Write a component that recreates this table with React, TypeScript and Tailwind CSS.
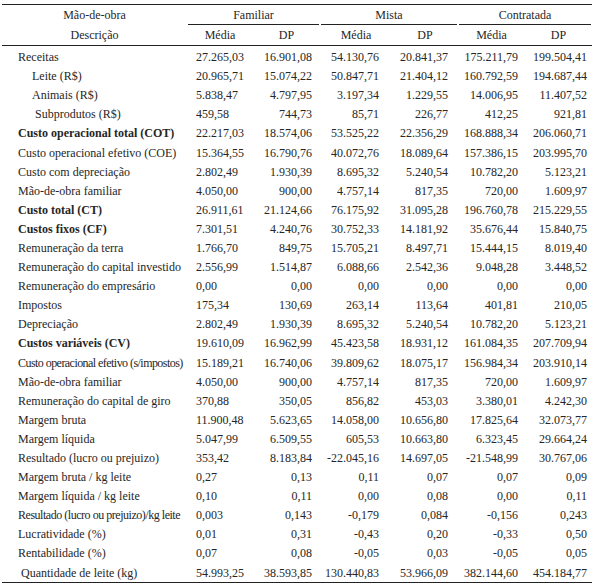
type Row = {
  label: string;
  values: string[];
  bold?: boolean;
  indent?: string;
  tight?: string;
};

const rows: Row[] = [
  { label: "Receitas", values: ["27.265,03", "16.901,08", "54.130,76", "20.841,37", "175.211,79", "199.504,41"] },
  { label: "Leite (R$)", indent: "pl-[30px]", values: ["20.965,71", "15.074,22", "50.847,71", "21.404,12", "160.792,59", "194.687,44"] },
  { label: "Animais (R$)", indent: "pl-[30px]", values: ["5.838,47", "4.797,95", "3.197,34", "1.229,55", "14.006,95", "11.407,52"] },
  { label: "Subprodutos (R$)", indent: "pl-[33px]", values: ["459,58", "744,73", "85,71", "226,77", "412,25", "921,81"] },
  { label: "Custo operacional total (COT)", bold: true, values: ["22.217,03", "18.574,06", "53.525,22", "22.356,29", "168.888,34", "206.060,71"] },
  { label: "Custo operacional efetivo (COE)", values: ["15.364,55", "16.790,76", "40.072,76", "18.089,64", "157.386,15", "203.995,70"] },
  { label: "Custo com depreciação", values: ["2.802,49", "1.930,39", "8.695,32", "5.240,54", "10.782,20", "5.123,21"] },
  { label: "Mão-de-obra familiar", values: ["4.050,00", "900,00", "4.757,14", "817,35", "720,00", "1.609,97"] },
  { label: "Custo total (CT)", bold: true, values: ["26.911,61", "21.124,66", "76.175,92", "31.095,28", "196.760,78", "215.229,55"] },
  { label: "Custos fixos (CF)", bold: true, values: ["7.301,51", "4.240,76", "30.752,33", "14.181,92", "35.676,44", "15.840,75"] },
  { label: "Remuneração da terra", values: ["1.766,70", "849,75", "15.705,21", "8.497,71", "15.444,15", "8.019,40"] },
  { label: "Remuneração do capital investido", values: ["2.556,99", "1.514,87", "6.088,66", "2.542,36", "9.048,28", "3.448,52"] },
  { label: "Remuneração do empresário", values: ["0,00", "0,00", "0,00", "0,00", "0,00", "0,00"] },
  { label: "Impostos", values: ["175,34", "130,69", "263,14", "113,64", "401,81", "210,05"] },
  { label: "Depreciação", values: ["2.802,49", "1.930,39", "8.695,32", "5.240,54", "10.782,20", "5.123,21"] },
  { label: "Custos variáveis (CV)", bold: true, values: ["19.610,09", "16.962,99", "45.423,58", "18.931,12", "161.084,35", "207.709,94"] },
  { label: "Custo operacional efetivo (s/impostos)", tight: "tracking-[-0.55px]", values: ["15.189,21", "16.740,06", "39.809,62", "18.075,17", "156.984,34", "203.910,14"] },
  { label: "Mão-de-obra familiar", values: ["4.050,00", "900,00", "4.757,14", "817,35", "720,00", "1.609,97"] },
  { label: "Remuneração do capital de giro", values: ["370,88", "350,05", "856,82", "453,03", "3.380,01", "4.242,30"] },
  { label: "Margem bruta", values: ["11.900,48", "5.623,65", "14.058,00", "10.656,80", "17.825,64", "32.073,77"] },
  { label: "Margem líquida", values: ["5.047,99", "6.509,55", "605,53", "10.663,80", "6.323,45", "29.664,24"] },
  { label: "Resultado (lucro ou prejuizo)", values: ["353,42", "8.183,84", "-22.045,16", "14.697,05", "-21.548,99", "30.767,06"] },
  { label: "Margem bruta / kg leite", values: ["0,27", "0,13", "0,11", "0,07", "0,07", "0,09"] },
  { label: "Margem líquida / kg leite", values: ["0,10", "0,11", "0,00", "0,08", "0,00", "0,11"] },
  { label: "Resultado (lucro ou prejuizo)/kg leite", tight: "tracking-[-0.47px]", values: ["0,003", "0,143", "-0,179", "0,084", "-0,156", "0,243"] },
  { label: "Lucratividade (%)", values: ["0,01", "0,31", "-0,43", "0,20", "-0,33", "0,50"] },
  { label: "Rentabilidade (%)", values: ["0,07", "0,08", "-0,05", "0,03", "-0,05", "0,05"] },
  { label: "Quantidade de leite (kg)", indent: "pl-[19px]", values: ["54.993,25", "38.593,85", "130.440,83", "53.966,09", "382.144,60", "454.184,77"] },
];

// alignment of each numeric column, matching the printed table
const valueCell = [
  "justify-start pl-[9px]",
  "justify-end pr-[8px]",
  "justify-end pr-[13px]",
  "justify-end pr-[10px]",
  "justify-end pr-[7px]",
  "justify-end pr-[5px]",
];

const groups = ["Familiar", "Mista", "Contratada"];

export default function App() {
  return (
    <div className="w-[600px] h-[587px] bg-white pt-[4px] pl-[2px] font-['Liberation_Serif',serif] text-[12px] text-[#262626]">
      <table className="table-fixed border-separate border-spacing-0 w-[590px]">
        <colgroup>
          <col className="w-[185px]" />
          <col className="w-[66px]" />
          <col className="w-[67px]" />
          <col className="w-[72px]" />
          <col className="w-[66px]" />
          <col className="w-[67px]" />
          <col className="w-[67px]" />
        </colgroup>
        <thead>
          <tr>
            <th className="p-0 font-normal border-t border-[#222]">
              <div className="h-[20px] flex items-center justify-center">Mão-de-obra</div>
            </th>
            {groups.map((g) => (
              <th key={g} colSpan={2} className="p-0 font-normal border-t border-[#222]">
                <div className="h-[20px] flex items-center justify-center border-b border-[#222] ml-[1px] mr-[1px]">
                  {g}
                </div>
              </th>
            ))}
          </tr>
          <tr>
            <th className="p-0 font-normal border-b border-[#222]">
              <div className="h-[20px] flex items-center justify-center">Descrição</div>
            </th>
            {groups.map((g) => [
              <th key={g + "m"} className="p-0 font-normal border-b border-[#222]">
                <div className="h-[20px] flex items-center justify-center">Média</div>
              </th>,
              <th key={g + "d"} className="p-0 font-normal border-b border-[#222]">
                <div className="h-[20px] flex items-center justify-center">DP</div>
              </th>,
            ])}
          </tr>
        </thead>
        <tbody>
          <tr>
            <td colSpan={7} className="p-0">
              <div className="h-[1.5px]" />
            </td>
          </tr>
          {rows.map((row, i) => {
            const last = i === rows.length - 1;
            const cellBorder = last ? "border-b border-[#222]" : "";
            return (
              <tr key={i}>
                <td className={`p-0 ${cellBorder}`}>
                  <div
                    className={`h-[19.1px] flex items-center whitespace-nowrap ${row.indent ?? "pl-[16px]"} ${
                      row.bold ? "font-bold" : ""
                    } ${row.tight ?? ""}`}
                  >
                    {row.label}
                  </div>
                </td>
                {row.values.map((v, j) => (
                  <td key={j} className={`p-0 ${cellBorder}`}>
                    <div className={`h-[19.1px] flex items-center whitespace-nowrap ${valueCell[j]}`}>{v}</div>
                  </td>
                ))}
              </tr>
            );
          })}
        </tbody>
      </table>
    </div>
  );
}
